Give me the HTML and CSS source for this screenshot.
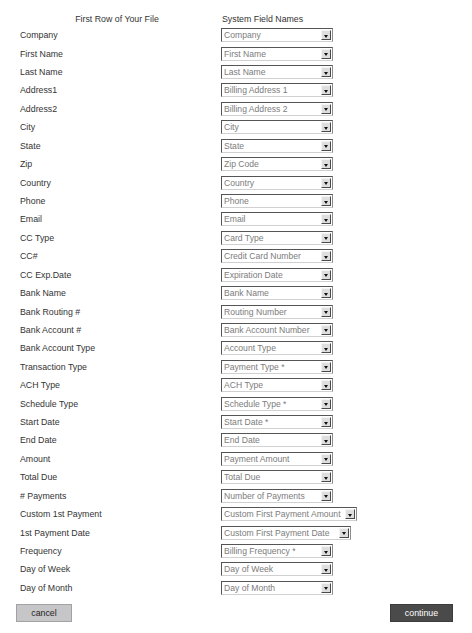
FILE: index.html
```html
<!DOCTYPE html>
<html>
<head>
<meta charset="utf-8">
<link rel="stylesheet" href="styles.css">
</head>
<body>
<div class="page">
  <div class="head">
    <div class="head-file">First Row of Your File</div>
    <div class="head-sys">System Field Names</div>
  </div>
  <div class="map">
    <div class="lbl">Company</div><div class="sel"><span class="val">Company</span><span class="btn"></span></div>
    <div class="lbl">First Name</div><div class="sel"><span class="val">First Name</span><span class="btn"></span></div>
    <div class="lbl">Last Name</div><div class="sel"><span class="val">Last Name</span><span class="btn"></span></div>
    <div class="lbl">Address1</div><div class="sel"><span class="val">Billing Address 1</span><span class="btn"></span></div>
    <div class="lbl">Address2</div><div class="sel"><span class="val">Billing Address 2</span><span class="btn"></span></div>
    <div class="lbl">City</div><div class="sel"><span class="val">City</span><span class="btn"></span></div>
    <div class="lbl">State</div><div class="sel"><span class="val">State</span><span class="btn"></span></div>
    <div class="lbl">Zip</div><div class="sel"><span class="val">Zip Code</span><span class="btn"></span></div>
    <div class="lbl">Country</div><div class="sel"><span class="val">Country</span><span class="btn"></span></div>
    <div class="lbl">Phone</div><div class="sel"><span class="val">Phone</span><span class="btn"></span></div>
    <div class="lbl">Email</div><div class="sel"><span class="val">Email</span><span class="btn"></span></div>
    <div class="lbl">CC Type</div><div class="sel"><span class="val">Card Type</span><span class="btn"></span></div>
    <div class="lbl">CC#</div><div class="sel"><span class="val">Credit Card Number</span><span class="btn"></span></div>
    <div class="lbl">CC Exp.Date</div><div class="sel"><span class="val">Expiration Date</span><span class="btn"></span></div>
    <div class="lbl">Bank Name</div><div class="sel"><span class="val">Bank Name</span><span class="btn"></span></div>
    <div class="lbl">Bank Routing #</div><div class="sel"><span class="val">Routing Number</span><span class="btn"></span></div>
    <div class="lbl">Bank Account #</div><div class="sel"><span class="val">Bank Account Number</span><span class="btn"></span></div>
    <div class="lbl">Bank Account Type</div><div class="sel"><span class="val">Account Type</span><span class="btn"></span></div>
    <div class="lbl">Transaction Type</div><div class="sel"><span class="val">Payment Type *</span><span class="btn"></span></div>
    <div class="lbl">ACH Type</div><div class="sel"><span class="val">ACH Type</span><span class="btn"></span></div>
    <div class="lbl">Schedule Type</div><div class="sel"><span class="val">Schedule Type *</span><span class="btn"></span></div>
    <div class="lbl">Start Date</div><div class="sel"><span class="val">Start Date *</span><span class="btn"></span></div>
    <div class="lbl">End Date</div><div class="sel"><span class="val">End Date</span><span class="btn"></span></div>
    <div class="lbl">Amount</div><div class="sel"><span class="val">Payment Amount</span><span class="btn"></span></div>
    <div class="lbl">Total Due</div><div class="sel"><span class="val">Total Due</span><span class="btn"></span></div>
    <div class="lbl"># Payments</div><div class="sel"><span class="val">Number of Payments</span><span class="btn"></span></div>
    <div class="lbl">Custom 1st Payment</div><div class="sel sel-amount"><span class="val">Custom First Payment Amount</span><span class="btn"></span></div>
    <div class="lbl">1st Payment Date</div><div class="sel sel-date"><span class="val">Custom First Payment Date</span><span class="btn"></span></div>
    <div class="lbl">Frequency</div><div class="sel"><span class="val">Billing Frequency *</span><span class="btn"></span></div>
    <div class="lbl">Day of Week</div><div class="sel"><span class="val">Day of Week</span><span class="btn"></span></div>
    <div class="lbl">Day of Month</div><div class="sel"><span class="val">Day of Month</span><span class="btn"></span></div>
  </div>
  <div class="actions">
    <button class="b-cancel">cancel</button>
    <button class="b-continue">continue</button>
  </div>
</div>
</body>
</html>
```
FILE: styles.css
```css
html, body {
  margin: 0;
  padding: 0;
  background: #ffffff;
}
body {
  font-family: "Liberation Sans", Arial, sans-serif;
  font-size: 8.8px;
  color: #333333;
}
.page {
  width: 472px;
  height: 633px;
  padding-top: 12px;
  box-sizing: border-box;
}
.head {
  display: grid;
  grid-template-columns: 194px auto;
  column-gap: 7px;
  margin-left: 20px;
  height: 14px;
  align-items: center;
}
.head-file {
  text-align: center;
}
.head-sys {
  padding-left: 1px;
}
.map {
  display: grid;
  grid-template-columns: 194px auto;
  grid-auto-rows: 18.43px;
  column-gap: 7px;
  align-items: center;
  margin-left: 20px;
}
.lbl {
  line-height: 12px;
}
.sel {
  display: flex;
  align-items: stretch;
  width: 112px;
  height: 14px;
  box-sizing: border-box;
  border: 1px solid;
  border-color: #555 #8c8c8c #d0d0d0 #555;
  background: #fff;
}
.sel-amount { width: 136px; }
.sel-date { width: 130px; }
.val {
  flex: 1;
  padding-left: 2px;
  color: #7c7c7c;
  font-size: 8.6px;
  line-height: 12px;
  white-space: nowrap;
  overflow: hidden;
}
.btn {
  width: 10px;
  flex: none;
  margin: 1px 1px 1px 0;
  box-sizing: border-box;
  background: #dedede;
  border: 1px solid;
  border-color: #f4f4f4 #4a4a4a #4a4a4a #f4f4f4;
  position: relative;
}
.btn::after {
  content: "";
  position: absolute;
  left: 2px;
  top: 3.5px;
  border-left: 2.5px solid transparent;
  border-right: 2.5px solid transparent;
  border-top: 3px solid #111;
}
.actions {
  display: flex;
  justify-content: space-between;
  padding: 0 19px 0 16px;
  margin-top: 6.5px;
}
.actions button {
  font-family: "Liberation Sans", Arial, sans-serif;
  font-size: 8.8px;
  height: 18px;
  padding: 0;
  margin: 0;
  cursor: pointer;
}
.b-cancel {
  width: 56px;
  background: #c6c6c8;
  border: 1px solid #a2a2a4;
  color: #222;
}
.b-continue {
  width: 63px;
  background: #4a4a4a;
  border: 1px solid #3c3c3c;
  color: #fff;
}
```
